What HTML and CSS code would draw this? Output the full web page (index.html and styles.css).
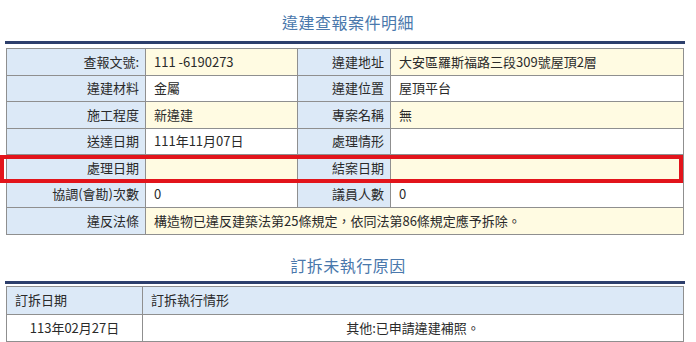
FILE: index.html
```html
<!DOCTYPE html>
<html lang="zh-Hant">
<head>
<meta charset="utf-8">
<link rel="stylesheet" href="styles.css">
</head>
<body>
<h2 class="sec-title first">違建查報案件明細</h2>
<div class="rule"></div>
<div class="table-wrap">
  <table class="detail">
    <colgroup>
      <col class="c1"><col class="c2"><col class="c3"><col class="c4">
    </colgroup>
    <tr class="odd"><th>查報文號:</th><td>111 -6190273</td><th>違建地址</th><td>大安區羅斯福路三段309號屋頂2層</td></tr>
    <tr class="even"><th>違建材料</th><td>金屬</td><th>違建位置</th><td>屋頂平台</td></tr>
    <tr class="odd"><th>施工程度</th><td>新違建</td><th>專案名稱</th><td>無</td></tr>
    <tr class="even"><th>送達日期</th><td>111年11月07日</td><th>處理情形</th><td></td></tr>
    <tr class="odd"><th>處理日期</th><td></td><th>結案日期</th><td></td></tr>
    <tr class="even"><th>協調(會勘)次數</th><td>0</td><th>議員人數</th><td>0</td></tr>
    <tr class="odd"><th>違反法條</th><td colspan="3">構造物已違反建築法第25條規定，依同法第86條規定應予拆除。</td></tr>
  </table>
  <div class="highlight"></div>
</div>
<h2 class="sec-title second">訂拆未執行原因</h2>
<div class="rule rule2"></div>
<table class="reason">
  <colgroup><col class="r1"><col class="r2"></colgroup>
  <tr class="head"><th>訂拆日期</th><th>訂拆執行情形</th></tr>
  <tr class="row"><td class="center">113年02月27日</td><td class="center">其他:已申請違建補照。</td></tr>
</table>
</body>
</html>
```
FILE: styles.css
```css
html, body {
  margin: 0;
  padding: 0;
  background: #fff;
}
body {
  width: 696px;
  height: 342px;
  overflow: hidden;
  font-family: "Noto Sans CJK TC", "Noto Sans", sans-serif;
  font-size: 13px;
  color: #2a2a2a;
}
.sec-title {
  margin: 0;
  font-size: 16px;
  line-height: 20px;
  font-weight: normal;
  text-align: center;
  color: #4a78ac;
  letter-spacing: 0.5px;
}
.sec-title.first {
  margin-top: 12px;
  margin-bottom: 9px;
}
.sec-title.second {
  margin-top: 20px;
  margin-bottom: 6px;
}
.rule {
  height: 3px;
  margin-left: 5px;
  width: 680px;
  background: #2d3f6c;
  margin-bottom: 4px;
}
.rule.rule2 {
  margin-bottom: 2px;
}
.table-wrap {
  position: relative;
  margin-left: 6px;
  width: 677px;
}
table {
  border-collapse: collapse;
  table-layout: fixed;
}
.detail {
  width: 677px;
}
.detail col.c1 { width: 139px; }
.detail col.c2 { width: 152px; }
.detail col.c3 { width: 93px; }
.detail col.c4 { width: 293px; }
.detail tr {
  height: 26.5px;
}
.detail th, .detail td {
  border: 1px solid #8f8f8f;
  padding: 0 8px;
  white-space: nowrap;
  font-weight: normal;
  line-height: 16px;
}
.detail th {
  background: #dce9f7;
  text-align: right;
  padding-right: 6px;
}
.detail td {
  text-align: left;
}
.detail tr.odd td {
  background: #fffbe2;
}
.detail tr.even td {
  background: #ffffff;
}
.highlight {
  position: absolute;
  left: -6px;
  top: 107px;
  width: 683px;
  height: 28px;
  box-sizing: border-box;
  border: 4px solid #e2141b;
  pointer-events: none;
}
.reason {
  margin-left: 6px;
  width: 677px;
}
.reason col.r1 { width: 136px; }
.reason col.r2 { width: 541px; }
.reason th, .reason td {
  border: 1px solid #8f8f8f;
  font-weight: normal;
  white-space: nowrap;
  line-height: 16px;
}
.reason tr.head {
  height: 28px;
}
.reason tr.head th {
  background: #dce9f7;
  text-align: left;
  padding: 0 8px;
}
.reason tr.row {
  height: 27px;
}
.reason td.center {
  text-align: center;
  background: #fff;
}
```
